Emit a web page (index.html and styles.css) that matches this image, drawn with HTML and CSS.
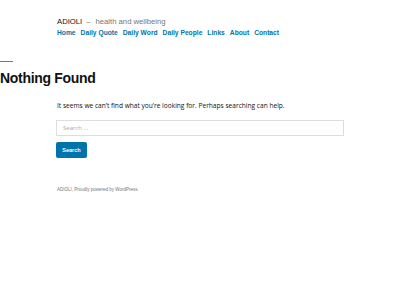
FILE: index.html
```html
<!DOCTYPE html>
<html lang="en">
<head>
    <meta charset="UTF-8">
    <meta name="viewport" content="width=device-width, initial-scale=1.0">
    <title>Page not found - ADIOLI</title>
    <link rel="stylesheet" href="styles.css">
</head>
<body>

    <header class="site-header">
        <div class="branding">
            <p class="site-title"><a href="#">ADIOLI</a></p>
            <span class="dash">&ndash;</span>
            <p class="site-description">health and wellbeing</p>
        </div>
        <nav class="main-nav">
            <a href="#">Home</a>
            <a href="#">Daily Quote</a>
            <a href="#">Daily Word</a>
            <a href="#">Daily People</a>
            <a href="#">Links</a>
            <a href="#">About</a>
            <a href="#">Contact</a>
        </nav>
    </header>

    <main class="site-main">
        <header class="page-header">
            <h1 class="page-title">Nothing Found</h1>
        </header>
        <div class="page-content">
            <p>It seems we can&rsquo;t find what you&rsquo;re looking for. Perhaps searching can help.</p>
            <form class="search-form">
                <input type="search" class="search-field" placeholder="Search &hellip;">
                <button type="submit" class="search-submit">Search</button>
            </form>
        </div>
    </main>

    <footer class="site-footer">
        <a href="#">ADIOLI</a>, <a href="#">Proudly powered by WordPress.</a>
    </footer>

</body>
</html>
```

FILE: styles.css
```css
body {
    margin: 0;
    background: #fff;
    color: #111;
    font-family: "Liberation Sans", Arial, sans-serif;
}
a {
    text-decoration: none;
}

.site-header {
    padding: 17px 57px 0;
}
.branding {
    display: flex;
    align-items: baseline;
    font-size: 7.7px;
    line-height: 10px;
}
.site-title,
.site-description {
    margin: 0;
}
.site-title a {
    color: #111;
}
.dash {
    margin: 0 5px 0 4px;
    color: #767676;
}
.site-description {
    color: #767676;
}
.main-nav {
    display: flex;
    gap: 5px;
    margin-top: 1px;
    font-size: 6.7px;
    font-weight: bold;
    line-height: 10px;
}
.main-nav a {
    color: #0073aa;
}

.site-main {
    margin-top: 23px;
}
.page-title {
    margin: 0;
    font-size: 14px;
    line-height: 20px;
    color: #111;
    letter-spacing: -0.3px;
}
.page-title::before {
    content: "";
    display: block;
    width: 13px;
    height: 1px;
    background: #767676;
    margin-bottom: 6px;
}
.page-content {
    padding: 0 56px;
    font-family: "Open Sans", sans-serif;
}
.page-content p {
    margin: 13px 0 9px 1px;
    font-size: 6.6px;
    line-height: 10px;
    color: #111;
}
.search-form {
    display: flex;
    flex-direction: column;
    align-items: flex-start;
    gap: 6px;
}
.search-field {
    box-sizing: border-box;
    width: 288px;
    height: 16px;
    border: 1px solid #ddd;
    border-radius: 0;
    padding: 0 6px;
    font-family: "Open Sans", sans-serif;
    font-size: 6px;
    color: #111;
    outline: none;
}
.search-field::placeholder {
    color: #aaa;
}
.search-submit {
    width: 31px;
    height: 16px;
    border: none;
    border-radius: 2px;
    background: #0073aa;
    color: #fff;
    font-family: "Liberation Sans", Arial, sans-serif;
    font-size: 5.5px;
    font-weight: bold;
    padding: 0;
    cursor: pointer;
}

.site-footer {
    padding: 29px 57px;
    font-size: 4.5px;
    color: #767676;
}
.site-footer a {
    color: #767676;
}
```
